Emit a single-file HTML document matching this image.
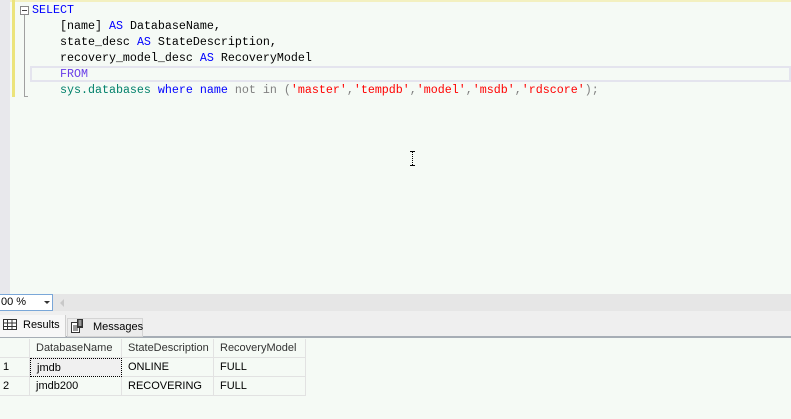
<!DOCTYPE html>
<html><head><meta charset="utf-8"><style>
*{margin:0;padding:0;box-sizing:border-box}
body{width:791px;height:419px;overflow:hidden;background:#f5faf5;position:relative;font-family:"Liberation Sans",sans-serif}
.abs{position:absolute}
.code{font-family:"Liberation Mono",monospace;font-size:11.67px;line-height:16px;white-space:pre;color:#000}
.kw{color:#0000ff}.str{color:#ff0000}.gr{color:#808080}.fn{color:#00806a}.pu{color:#6a3ee8}
.cell{position:absolute;font-size:11px;color:#000;line-height:19px;padding-left:6px;border-right:1px solid #e2e2e2;border-bottom:1px solid #e2e2e2}
</style></head><body>
<div class="abs" style="left:0;top:0;width:791px;height:294px;background:#f5faf5"></div>
<div class="abs" style="left:0;top:0;width:791px;height:2px;background:#f3f0c0"></div>
<div class="abs" style="left:0;top:0;width:10px;height:294px;background:#e8e8ec"></div>
<div class="abs" style="left:12px;top:0;width:3px;height:97px;background:#ece47a"></div>
<div class="abs" style="left:20px;top:6px;width:9px;height:9px;border:1px solid #8a8a8a;background:#fff"></div>
<div class="abs" style="left:22px;top:10px;width:5px;height:1px;background:#444"></div>
<div class="abs" style="left:24px;top:15px;width:1px;height:82px;background:#a0a0a0"></div>
<div class="abs" style="left:24px;top:96px;width:4px;height:1px;background:#a0a0a0"></div>
<div class="abs" style="left:30px;top:66px;width:761px;height:16px;border:2px solid #e4e4ee"></div>
<div class="abs code" style="left:32px;top:2px"><span class="kw">SELECT</span>
    [name] <span class="kw">AS</span> DatabaseName,
    state_desc <span class="kw">AS</span> StateDescription,
    recovery_model_desc <span class="kw">AS</span> RecoveryModel
    <span class="pu">FROM</span>
    <span class="fn">sys.databases</span> <span class="kw">where</span> <span class="kw">name</span> <span class="gr">not in (</span><span class="str">'master'</span><span class="gr">,</span><span class="str">'tempdb'</span><span class="gr">,</span><span class="str">'model'</span><span class="gr">,</span><span class="str">'msdb'</span><span class="gr">,</span><span class="str">'rdscore'</span><span class="gr">);</span></div>
<div class="abs" style="left:412px;top:152px;width:1px;height:13px;border-left:1px dotted #000"></div>
<div class="abs" style="left:410px;top:151px;width:5px;height:1px;background:#000"></div>
<div class="abs" style="left:410px;top:165px;width:5px;height:1px;background:#000"></div>
<div class="abs" style="left:0;top:294px;width:791px;height:17px;background:#e6e6e6"></div>
<div class="abs" style="left:0;top:294px;width:53px;height:17px;background:#fff;border:1px solid #7aa7d8;border-left:none;font-size:11px;line-height:15px;padding-left:1px">00 %</div>
<div class="abs" style="left:44px;top:301px;width:0;height:0;border-left:3px solid transparent;border-right:3px solid transparent;border-top:3px solid #333"></div>
<div class="abs" style="left:60px;top:299px;width:0;height:0;border-top:4px solid transparent;border-bottom:4px solid transparent;border-right:4px solid #c8c8c8"></div>
<div class="abs" style="left:0;top:311px;width:791px;height:27px;background:#efefef"></div>
<div class="abs" style="left:0;top:336px;width:791px;height:2px;background:#a6adb5"></div>
<div class="abs" style="left:0;top:315px;width:66px;height:22px;background:#f7f7f7;border-right:1px solid #cfcfcf;font-size:11px;line-height:20px;padding-left:23px">Results</div>
<svg class="abs" style="left:3px;top:319px" width="14" height="11"><rect x="0.5" y="0.5" width="13" height="10" fill="#fff" stroke="#333"/><path d="M0 4H14M0 7.5H14M4.5 0V11M9 0V11" stroke="#333"/></svg>
<div class="abs" style="left:67px;top:318px;width:76px;height:19px;background:#ececec;border:1px solid #d4d4d4;font-size:11px;line-height:17px;padding-left:25px">Messages</div>
<svg class="abs" style="left:71px;top:319px" width="14" height="14"><rect x="0.5" y="3.5" width="8" height="10" fill="#fff" stroke="#333"/><path d="M2 7H7M2 9H7M2 11H7" stroke="#333"/><rect x="6" y="0" width="6" height="9" fill="#333"/><path d="M7.5 2H10.5M7.5 4H10.5M7.5 6H10.5" stroke="#fff"/></svg>
<div class="cell" style="left:0;top:339px;width:30px;height:19px"></div>
<div class="cell" style="left:30px;top:339px;width:92px;height:19px;color:#333">DatabaseName</div>
<div class="cell" style="left:122px;top:339px;width:92px;height:19px;color:#333">StateDescription</div>
<div class="cell" style="left:214px;top:339px;width:92px;height:19px;color:#333">RecoveryModel</div>
<div class="cell" style="left:0;top:358px;width:30px;height:19px;padding-left:3px">1</div>
<div class="cell" style="left:30px;top:358px;width:92px;height:19px;background:#f0f0f0;border:1px dotted #000">jmdb</div>
<div class="cell" style="left:122px;top:358px;width:92px;height:19px">ONLINE</div>
<div class="cell" style="left:214px;top:358px;width:92px;height:19px">FULL</div>
<div class="cell" style="left:0;top:377px;width:30px;height:19px;padding-left:3px">2</div>
<div class="cell" style="left:30px;top:377px;width:92px;height:19px">jmdb200</div>
<div class="cell" style="left:122px;top:377px;width:92px;height:19px">RECOVERING</div>
<div class="cell" style="left:214px;top:377px;width:92px;height:19px">FULL</div>
</body></html>
